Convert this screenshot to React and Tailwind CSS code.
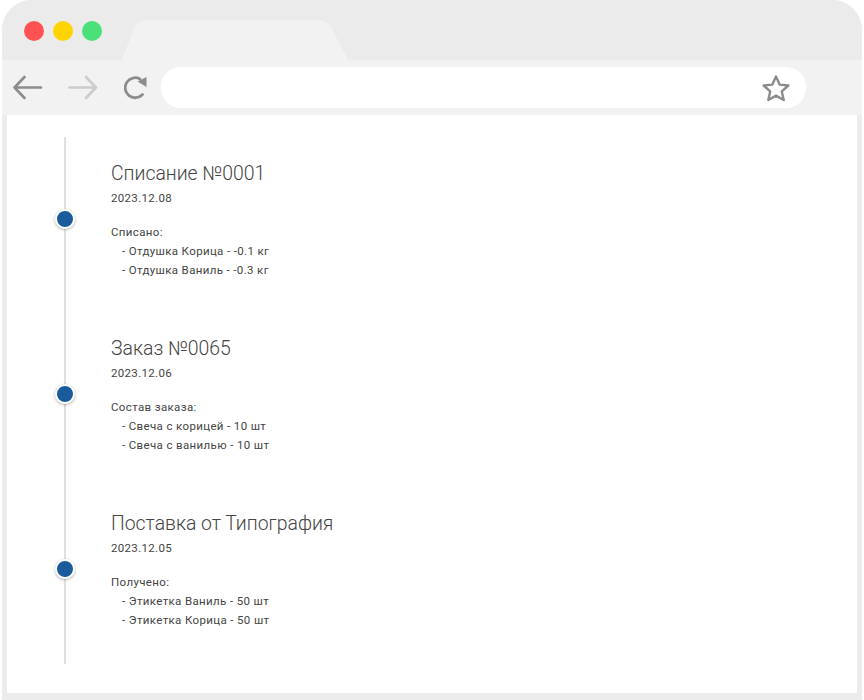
import React from 'react';

const EVENTS = [
  {
    title: 'Списание №0001',
    date: '2023.12.08',
    label: 'Списано:',
    lines: ['Отдушка Корица - -0.1 кг', 'Отдушка Ваниль - -0.3 кг'],
  },
  {
    title: 'Заказ №0065',
    date: '2023.12.06',
    label: 'Состав заказа:',
    lines: ['Свеча с корицей - 10 шт', 'Свеча с ванилью - 10 шт'],
  },
  {
    title: 'Поставка от Типография',
    date: '2023.12.05',
    label: 'Получено:',
    lines: ['Этикетка Ваниль - 50 шт', 'Этикетка Корица - 50 шт'],
  },
];

function Arrow({ flip, color }) {
  return (
    <svg width="30" height="26" viewBox="0 0 30 26" fill="none" stroke={color} strokeWidth="2.6" strokeLinecap="round" strokeLinejoin="round">
      {flip
        ? <path d="M1.5 13.5H28M18 3L28 13.5L18 24" />
        : <path d="M28 13.5H1.5M11.5 3L1.5 13.5L11.5 24" />}
    </svg>
  );
}

function Reload() {
  return (
    <svg width="26" height="26" viewBox="0 0 26 26" fill="none">
      <path d="M19.5 20.5A10 10 0 1 1 17 5" stroke="#8c8c8c" strokeWidth="2.8" strokeLinecap="round" />
      <path d="M14.5 7.5L23.5 3V13Z" fill="#8c8c8c" />
    </svg>
  );
}

function Star() {
  return (
    <svg width="30" height="28" viewBox="0 0 30 28" fill="none">
      <path d="M15 2.5L18.6 10.6L27.4 11.5L20.8 17.4L22.7 26L15 21.6L7.3 26L9.2 17.4L2.6 11.5L11.4 10.6Z" stroke="#8c8c8c" strokeWidth="2.4" strokeLinejoin="round" />
    </svg>
  );
}

function Event({ event }) {
  return (
    <div className="relative h-[175px] pl-[104px] pt-[23px] text-[#444444]">
      <div className="absolute left-[48px] top-[72px] h-5 w-5 rounded-full border-2 border-white bg-[#1a5b9c] shadow-[0_1px_3px_rgba(0,0,0,0.3)]" />
      <div className="text-[19.4px] font-light leading-[28px]">{event.title}</div>
      <div className="mt-[1px] text-[11.5px] leading-[18px] tracking-[0.32px]">{event.date}</div>
      <div className="mt-[16px] text-[11.5px] leading-[19px] tracking-[0.36px]">
        <div>{event.label}</div>
        {event.lines.map((line) => (
          <div key={line} className="pl-[11px]">- {line}</div>
        ))}
      </div>
    </div>
  );
}

export default function App() {
  return (
    <div className="h-[700px] w-[864px] bg-white font-['Roboto',sans-serif]">
      <div className="mx-[2px] flex h-[700px] flex-col overflow-hidden rounded-t-[30px] bg-[#ececec]">
        <div className="relative h-[60px] shrink-0 bg-[#ebebeb]">
          <svg className="absolute left-[118px] top-[20px]" width="230" height="40" viewBox="0 0 230 40">
            <path d="M2 40L13 11C16 4 20 0 30 0H196C206 0 210 4 213 11L228 40Z" fill="#f2f2f2" />
          </svg>
          <div className="relative flex gap-[9px] pl-[22px] pt-[21px]">
            <div className="h-5 w-5 rounded-full bg-[#ff5252]" />
            <div className="h-5 w-5 rounded-full bg-[#ffd400]" />
            <div className="h-5 w-5 rounded-full bg-[#4be07a]" />
          </div>
        </div>
        <div className="flex h-[55px] shrink-0 items-start bg-[#f2f2f2]">
          <div className="flex items-center pl-[11px] pt-[14px]">
            <Arrow color="#8c8c8c" />
            <div className="ml-[25px]"><Arrow flip color="#cccccc" /></div>
            <div className="ml-[25px]"><Reload /></div>
          </div>
          <div className="ml-[12px] mt-[7px] flex h-[41px] w-[645px] items-center justify-end rounded-[20px] bg-white pr-[15px]">
            <Star />
          </div>
        </div>
        <div className="mx-[5px] h-[578px] shrink-0 bg-white">
          <div className="relative mt-[22px] h-[527px]">
            <div className="absolute left-[57px] top-0 h-[527px] w-[2px] bg-[#e0e0e0]" />
            {EVENTS.map((event) => (
              <Event key={event.title} event={event} />
            ))}
          </div>
        </div>
      </div>
    </div>
  );
}
